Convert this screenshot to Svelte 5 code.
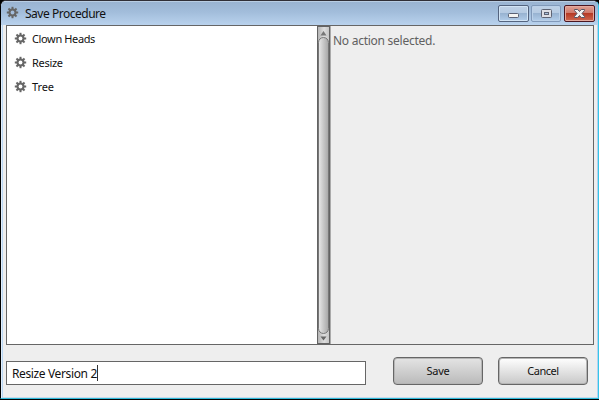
<script>
  const procedures = ['Clown Heads', 'Resize', 'Tree'];
  const angles = [0, 45, 90, 135];
  const spacing = [-0.37, -0.3, -0.1];
  let name = 'Resize Version 2';
</script>

{#snippet gear()}
  <svg class="gear" width="13" height="13" viewBox="-6.5 -6.5 13 13">
    {#each angles as a}
      <rect x="-1" y="-5.7" width="2" height="11.400" transform="rotate({a})" fill="#666" />
    {/each}
    <circle r="3" fill="none" stroke="#666" stroke-width="2" />
    <circle r="1.9" class="hole" />
  </svg>
{/snippet}

<div class="window">
  <header>
    {@render gear()}
    <span class="title">Save Procedure</span>
    <div class="controls">
      <div class="ctl">
        <svg width="29" height="15"><rect x="9.5" y="7.5" width="10" height="4" rx="1" fill="#f4f4f2" stroke="#5b6274" /></svg>
      </div>
      <div class="ctl dim">
        <svg width="28" height="15"><rect x="9.5" y="3.5" width="10" height="8" rx="1" fill="#dedfe5" stroke="#5d6373" /><rect x="12.5" y="6.5" width="4" height="2" fill="#a9c0dc" stroke="#5d6373" /></svg>
      </div>
      <div class="ctl close">
        <svg width="29" height="15"><path d="M9.5 3.5h3.2l1.8 2 1.800-2h3.2v1l-2.500 3 2.500 3v1h-3.200l-1.800-2-1.800 2H9.5v-1l2.500-3-2.500-3z" fill="#f3f3f3" stroke="#565665" /></svg>
      </div>
    </div>
  </header>
  <main>
    <div class="list">
      {#each procedures as p, i}
        <div class="item">{@render gear()}<span style="letter-spacing:{spacing[i]}px">{p}</span></div>
      {/each}
    </div>
    <div class="scroll">
      <svg width="11" height="10"><path d="M2.500 8.500 5.500 4l3 4.500z" fill="#777" /></svg>
      <div class="thumb"></div>
      <svg width="11" height="9"><path d="M2.500 2.500h6L5.500 6.500z" fill="#666" /></svg>
    </div>
    <div class="detail"><span>No action selected.</span></div>
  </main>
  <footer>
    <div class="field"><span>{name}</span><i></i></div>
    <div class="btn save"><span>Save</span></div>
    <div class="btn cancel"><span>Cancel</span></div>
  </footer>
</div>

<style>
  :global(body) { margin: 0; background: #000; overflow: hidden; }
  * { box-sizing: border-box; }
  svg { display: block; flex: none; }
  .window {
    width: 599px; height: 399px; display: flex; flex-direction: column;
    border: 1px solid;
    border-color: #302f37 #35c6e8 #2eb9d8 #000;
    border-radius: 6px 6px 0 0; background: #eee;
    box-shadow: inset 1px 0 #e1effc, inset 2px 0 #b9d6f3, inset -1px 0 #b5d3f1, inset 0 -1px #c9dbea;
    font-family: "Noto Sans", "Open Sans", sans-serif; font-size: 11px; color: #111;
    overflow: hidden;
  }
  header {
    height: 24px; flex: none; display: flex; padding-left: 5px;
    background: linear-gradient(#d8e7f5 0, #9ab4d2 1px, #a2bddb 11px, #b9d2ed 24px);
  }
  .gear { margin-top: 5px; }
  header .hole { fill: #a3bddb; }
  .item .hole { fill: #fff; }
  .title { margin-left: 6px; line-height: 25px; font-size: 12px; letter-spacing: -0.48px; white-space: nowrap; }
  .controls { display: flex; margin: 4px 3px 0 auto; gap: 2px; height: 17px; }
  .ctl {
    width: 31px; height: 17px; border: 1px solid #54647f; border-radius: 2px;
    background: linear-gradient(#bfd1e6 0, #b5cae2 48%, #98b3d1 50%, #b2cdea 100%);
    box-shadow: inset 0 0 0 1px #d2e4f5;
  }
  .dim { width: 30px; border-color: #8199b9; box-shadow: inset 0 0 0 1px #bad0e8; }
  .close {
    margin-left: 1px; border-color: #4b1621;
    background: linear-gradient(#dfa195 0, #ce786a 47%, #b63a25 50%, #cf6850 100%);
    box-shadow: inset 0 0 0 1px #e4a99e;
  }
  main { height: 320px; width: 588px; margin-left: 5px; display: flex; border: 1px solid #666; flex: none; }
  .list { width: 310px; background: #fff; padding-top: 1px; }
  .item { display: flex; height: 24px; padding-left: 7px; }
  .item span { margin-left: 5px; line-height: 24px; white-space: nowrap; }
  .scroll {
    width: 13px; border: 1px solid #636363; display: flex; flex-direction: column;
    background: linear-gradient(90deg, #b4b4b4, #dedede 55%, #c6c6c6);
  }
  .thumb {
    flex: 1; border: 1px solid #777; border-radius: 6px;
    background: linear-gradient(90deg, #e6e6e6, #d0d0d0 35%, #a9a9a9);
  }
  .detail { flex: 1; padding: 6px 0 0 2px; border-left: 1px solid #aaa; font-size: 12px; line-height: 18px; color: #606060; }
  .detail span { letter-spacing: -0.26px; white-space: nowrap; }
  footer { display: flex; padding-left: 5px; }
  .field {
    margin-top: 16px; width: 360px; height: 24px; border: 1px solid #666; background: #fff;
    display: flex; padding-left: 5px; line-height: 24px; font-size: 12px;
  }
  .field span { letter-spacing: -0.37px; white-space: nowrap; }
  .field i { width: 1px; height: 16px; background: #333; margin-top: 3px; }
  .btn {
    width: 90px; height: 28px; margin: 12px 0 0 27px; border: 1px solid #666; border-radius: 4px;
    text-align: center; line-height: 26px; font-size: 11px; letter-spacing: -0.2px;
    box-shadow: inset 0 0 0 1px #b5b5b5;
  }
  .save { background: linear-gradient(#e4e4e4, #bababa); }
  .cancel { margin-left: 15px; letter-spacing: -0.45px; background: linear-gradient(#fff, #c8c8c8); }
</style>
